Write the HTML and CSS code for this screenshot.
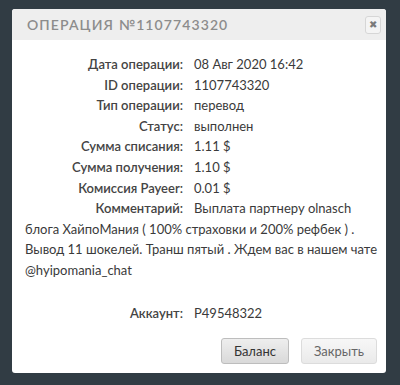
FILE: index.html
```html
<!DOCTYPE html>
<html lang="ru">
<head>
    <meta charset="UTF-8">
    <title>Операция</title>
    <link rel="stylesheet" href="styles.css">
</head>
<body>
    <div class="modal">
        <div class="modal-header">
            <span class="modal-title">Операция №1107743320</span>
            <button class="close">&#10006;</button>
        </div>
        <div class="modal-body">
            <div class="row"><span class="label">Дата операции:</span><span class="value">08 Авг 2020 16:42</span></div>
            <div class="row"><span class="label">ID операции:</span><span class="value">1107743320</span></div>
            <div class="row"><span class="label">Тип операции:</span><span class="value">перевод</span></div>
            <div class="row"><span class="label">Статус:</span><span class="value">выполнен</span></div>
            <div class="row"><span class="label">Сумма списания:</span><span class="value">1.11 $</span></div>
            <div class="row"><span class="label">Сумма получения:</span><span class="value">1.10 $</span></div>
            <div class="row"><span class="label">Комиссия Payeer:</span><span class="value">0.01 $</span></div>
            <div class="row"><span class="label">Комментарий:</span><span class="value">Выплата партнеру olnasch блога ХайпоМания ( 100% страховки и 200% рефбек ) . Вывод 11 шокелей. Транш пятый . Ждем вас в нашем чате @hyipomania_chat</span></div>
            <div class="row account"><span class="label">Аккаунт:</span><span class="value">P49548322</span></div>
        </div>
        <div class="modal-footer">
            <button class="btn btn-dark">Баланс</button>
            <button class="btn">Закрыть</button>
        </div>
    </div>
</body>
</html>
```

FILE: styles.css
```css
body {
    margin: 0;
    padding: 9px 14px 12px 12px;
    background-color: #313c44;
    font-family: Lato, "Noto Sans", sans-serif;
    color: #333;
}

.modal {
    background-color: #fff;
    border-radius: 3px;
    height: 364px;
    display: flex;
    flex-direction: column;
}

.modal-header {
    background-color: #eeeeee;
    height: 31px;
    display: flex;
    align-items: center;
    justify-content: space-between;
    padding: 0 5px 0 15px;
    border-radius: 3px 3px 0 0;
}

.modal-title {
    text-transform: uppercase;
    color: #8c8c8c;
    font-size: 14px;
    font-weight: 600;
    letter-spacing: 1.1px;
}

.close {
    width: 16px;
    height: 18px;
    padding: 0;
    border: 1px solid #d6d6d6;
    border-radius: 3px;
    background-color: #f4f4f4;
    color: #7a7a7a;
    font-size: 10px;
    line-height: 16px;
}

.modal-body {
    padding: 14px 4px 0 13px;
    font-size: 13px;
    line-height: 20.6px;
    color: #3a3a3a;
}

.label {
    display: inline-block;
    width: 158px;
    text-align: right;
    font-weight: 600;
    color: #444;
    margin-right: 11px;
}

.account {
    margin-top: 22px;
}

.modal-footer {
    margin-top: auto;
    display: flex;
    justify-content: flex-end;
    gap: 12px;
    padding: 0 9px 9px 0;
}

.btn {
    height: 26px;
    padding: 0 12px;
    font-family: inherit;
    font-size: 13px;
    color: #666;
    border: 1px solid #dcdcdc;
    border-radius: 3px;
    background: linear-gradient(#f7f7f7, #eaeaea);
}

.btn-dark {
    color: #333;
    border-color: #bdbdbd;
    background: linear-gradient(#eeeeee, #d9d9d9);
}
```
